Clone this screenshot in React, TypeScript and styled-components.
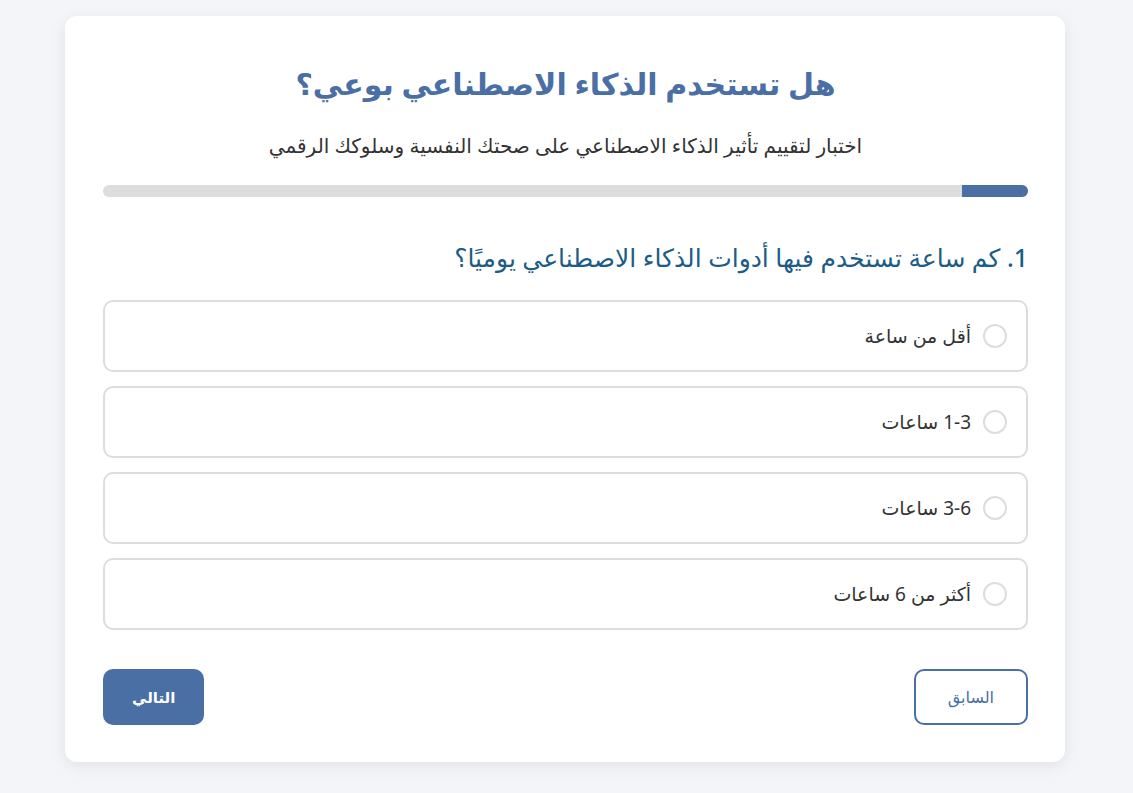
import React, { useState } from "react";
import styled, { createGlobalStyle } from "styled-components";

const GlobalStyle = createGlobalStyle`
    body {
        margin: 0;
        background: #f4f5f9;
        font-family: "Noto Sans", "DejaVu Sans", sans-serif;
    }
`;

const options = ["أقل من ساعة", "1-3 ساعات", "3-6 ساعات", "أكثر من 6 ساعات"];

const App = () => {
    const [selected, setSelected] = useState<number | null>(null);
    const progress = (1 / 14) * 100;

    return (
        <Page>
            <GlobalStyle />
            <Card dir="rtl">
                <Title>هل تستخدم الذكاء الاصطناعي بوعي؟</Title>
                <Subtitle>اختبار لتقييم تأثير الذكاء الاصطناعي على صحتك النفسية وسلوكك الرقمي</Subtitle>
                <ProgressTrack>
                    <ProgressFill style={{ width: `${progress}%` }} />
                </ProgressTrack>
                <Question>1. كم ساعة تستخدم فيها أدوات الذكاء الاصطناعي يوميًا؟</Question>
                <OptionList>
                    {options.map((text, i) => (
                        <Option key={text} $active={selected === i} onClick={() => setSelected(i)}>
                            <Radio $active={selected === i} />
                            <OptionText>{text}</OptionText>
                        </Option>
                    ))}
                </OptionList>
                <Actions>
                    <PrevButton>السابق</PrevButton>
                    <NextButton>التالي</NextButton>
                </Actions>
            </Card>
        </Page>
    );
};

const Page = styled.div`
    padding: 16px 0 31px 65px;
    display: flex;
`;
const Card = styled.div`
    width: 1000px;
    box-sizing: border-box;
    background: #fff;
    border-radius: 12px;
    box-shadow: 0 4px 16px rgba(0, 0, 0, 0.08);
    padding: 46px 37px 37px 38px;
`;
const Title = styled.h1`
    margin: 0;
    text-align: center;
    font-size: 30px;
    font-weight: bold;
    line-height: 44px;
    color: #4a6fa5;
`;
const Subtitle = styled.p`
    margin: 25px 0 0;
    text-align: center;
    font-size: 20px;
    line-height: 30px;
    color: #333;
`;
const ProgressTrack = styled.div`
    margin-top: 24px;
    height: 12px;
    border-radius: 6px;
    background: #dddddd;
    overflow: hidden;
`;
const ProgressFill = styled.div`
    height: 100%;
    background: #4a6fa5;
`;
const Question = styled.h2`
    margin: 44px 0 0;
    font-size: 25px;
    font-weight: 500;
    line-height: 32px;
    color: #1c5d88;
`;
const OptionList = styled.div`
    margin-top: 27px;
    display: flex;
    flex-direction: column;
    gap: 14px;
`;
const Option = styled.label<{ $active: boolean }>`
    height: 72px;
    box-sizing: border-box;
    display: flex;
    align-items: center;
    gap: 12px;
    padding: 0 19px;
    border: 2px solid ${(p) => (p.$active ? "#4a6fa5" : "#dddddd")};
    border-radius: 10px;
    cursor: pointer;
`;
const Radio = styled.span<{ $active: boolean }>`
    width: 24px;
    height: 24px;
    box-sizing: border-box;
    border-radius: 50%;
    border: 2px solid ${(p) => (p.$active ? "#4a6fa5" : "#dddddd")};
    background: ${(p) => (p.$active ? "#4a6fa5" : "#fff")};
`;
const OptionText = styled.span`
    font-size: 19px;
    color: #333;
`;
const Actions = styled.div`
    margin-top: 39px;
    display: flex;
    justify-content: space-between;
`;
const PrevButton = styled.button`
    height: 56px;
    padding: 0 32px;
    border: 2px solid #4a6fa5;
    border-radius: 10px;
    background: #fff;
    color: #4a6fa5;
    font-family: "Noto Sans", "DejaVu Sans", sans-serif;
    font-size: 16px;
`;
const NextButton = styled.button`
    height: 56px;
    padding: 0 29px;
    border: none;
    border-radius: 10px;
    background: #4a6fa5;
    color: #fff;
    font-family: "Noto Sans", "DejaVu Sans", sans-serif;
    font-size: 15px;
    font-weight: bold;
`;

export default App;
